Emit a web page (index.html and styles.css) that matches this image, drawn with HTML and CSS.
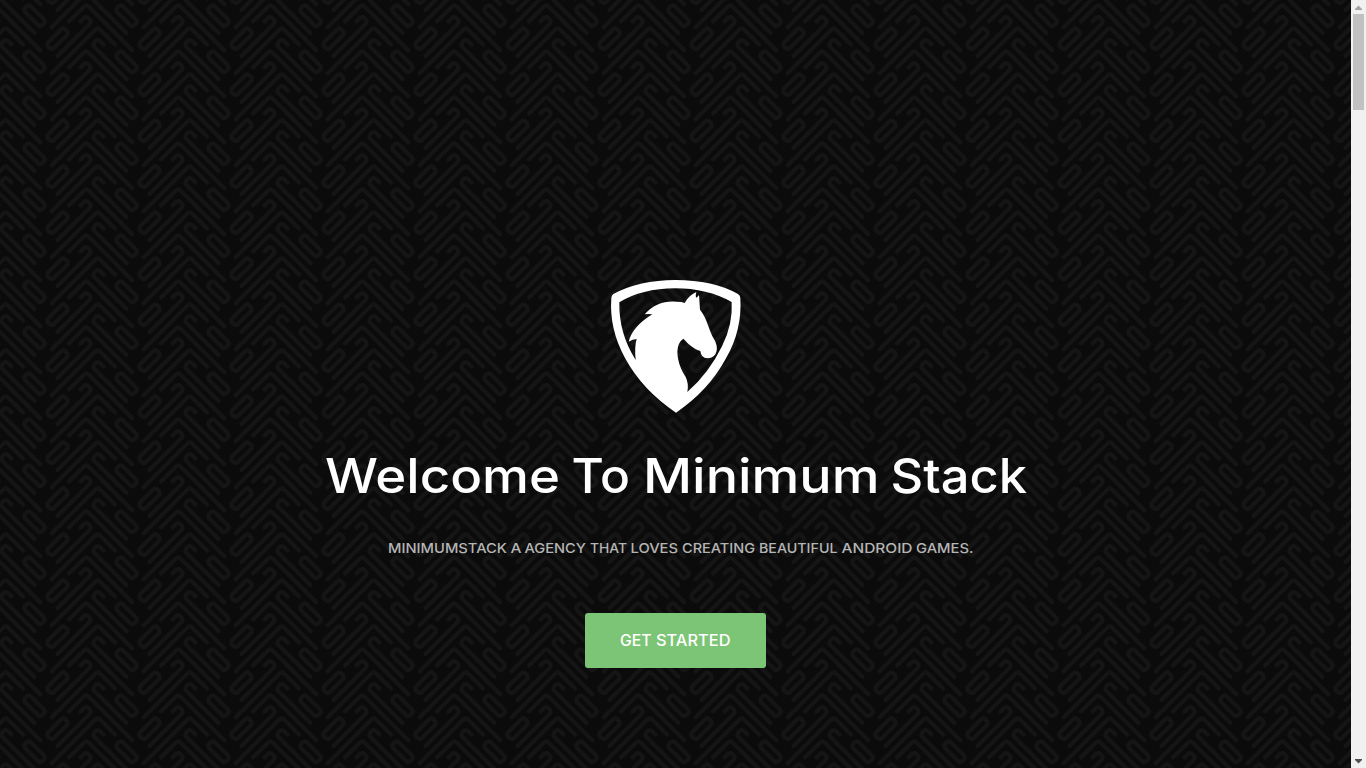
FILE: index.html
```html
<!DOCTYPE html>
<html lang="en">
<head>
<meta charset="utf-8">
<title>Minimum Stack</title>
<link rel="stylesheet" href="styles.css">
</head>
<body>
<main class="hero">
  <svg class="weave" aria-hidden="true">
    <defs>
      <g id="half">
        <path d="M-4 2L-1.400-.6Q-1-1-.6-.6L7 7"/>
        <path d="M2-2L1.400-2.600Q1-3 .6-2.600Q0-2 .4-1.600L6 4"/>
        <path d="M4.400-.4L4.600-.6Q5-1 5.400-.6L7.600 1.600Q8 2 7.600 2.400L7.400 2.600Q7 3 6.600 2.600L4.400.4Q4 0 4.400-.4Z"/>
      </g>
      <g id="strands">
        <use href="#half"/>
        <use href="#half" transform="translate(16 4) scale(-1 1)"/>
      </g>
      <g id="column">
        <use href="#strands" y="-8"/><use href="#strands"/><use href="#strands" y="8"/>
      </g>
      <pattern id="tile" width="92" height="46" patternUnits="userSpaceOnUse" patternTransform="translate(0 10)">
        <g class="strand" transform="scale(5.75)">
          <use href="#column" x="-16"/><use href="#column"/><use href="#column" x="16"/>
        </g>
      </pattern>
    </defs>
    <rect width="100%" height="100%" fill="url(#tile)"/>
  </svg>
  <div class="content">
    <svg class="shield" viewBox="0 0 450 450" role="img" aria-label="Horse shield">
      <path fill="#fff" fill-rule="evenodd" d="M34 84Q34 76 40 72Q118 30 226 30Q340 30 414 72Q421 77 421 84Q427 180 378 265Q326 362 228 428Q127 360 75 264Q27 176 34 84ZM58 97Q56 190 107 270Q103 229 110 207Q98 207 86 215Q97 170 157 133Q146 131 134 133Q171 90 231 95Q245 95 254 99Q266 76 289 66Q286 76 288 83Q293 81 297 75L300 119C322 145 326 181 342 207Q353 226 350 242Q346 264 322 265Q303 264 301 243C277 235 265 221 250 206Q233 217 232 245C233 280 247 304 257 321Q267 341 262 366Q326 311 366 229Q399 163 395 96Q321 55 226 55Q125 56 58 97Z"/>
    </svg>
    <h1 class="title">
      <svg class="title-line" viewBox="320 445 710 60">
        <text x="325" y="493" textLength="235" lengthAdjust="spacingAndGlyphs">Welcome</text>
        <text x="571.5" y="493" textLength="58.5" lengthAdjust="spacingAndGlyphs">To</text>
        <text x="643" y="493" textLength="236.5" lengthAdjust="spacingAndGlyphs">Minimum</text>
        <text x="890.5" y="493" textLength="136.5" lengthAdjust="spacingAndGlyphs">Stack</text>
      </svg>
    </h1>
    <p class="subtitle">
      <svg class="subtitle-line" viewBox="375 535 600 25">
        <text x="388" y="553" textLength="119" lengthAdjust="spacingAndGlyphs">MINIMUMSTACK</text>
        <text x="510.5" y="553" textLength="11" lengthAdjust="spacingAndGlyphs">A</text>
        <text x="524.5" y="553" textLength="61.5" lengthAdjust="spacingAndGlyphs">AGENCY</text>
        <text x="590" y="553" textLength="37" lengthAdjust="spacingAndGlyphs">THAT</text>
        <text x="630.5" y="553" textLength="47.5" lengthAdjust="spacingAndGlyphs">LOVES</text>
        <text x="682" y="553" textLength="73" lengthAdjust="spacingAndGlyphs">CREATING</text>
        <text x="759" y="553" textLength="78.5" lengthAdjust="spacingAndGlyphs">BEAUTIFUL</text>
        <text x="841.5" y="553" textLength="71" lengthAdjust="spacingAndGlyphs">ANDROID</text>
        <text x="916" y="553" textLength="57.5" lengthAdjust="spacingAndGlyphs">GAMES.</text>
      </svg>
    </p>
    <a class="button" href="#">
      <svg class="button-label" viewBox="585 613 181 55">
        <text x="620" y="646" textLength="31.5" lengthAdjust="spacingAndGlyphs">GET</text>
        <text x="656" y="646" textLength="74.5" lengthAdjust="spacingAndGlyphs">STARTED</text>
      </svg>
    </a>
  </div>
</main>
<div class="scrollbar">
  <svg class="arrow" viewBox="0 0 15 14"><path fill="#a3a3a3" d="M4 10V9L7.500 5.500L11 9V10Z"/></svg>
  <div class="thumb"></div>
  <svg class="arrow" viewBox="0 0 15 14"><path fill="#505050" d="M4 5V6L7.500 9.500L11 6V5Z"/></svg>
</div>
</body>
</html>
```
FILE: styles.css
```css
body {
  margin: 0;
  display: flex;
  width: 1366px;
  height: 768px;
  overflow: hidden;
  background: #0b0b0b;
  font-family: Inter, "Liberation Sans", sans-serif;
}
svg { display: block; }
.hero {
  position: relative;
  width: 1351px;
  height: 768px;
}
.weave {
  position: absolute;
  inset: 0;
  width: 100%;
  height: 100%;
}
.strand {
  fill: none;
  stroke: #151515;
  stroke-width: 0.68;
  stroke-linejoin: round;
  stroke-linecap: round;
}
.content {
  position: relative;
  box-sizing: border-box;
  width: 1350px;
  padding-top: 270px;
  display: flex;
  flex-direction: column;
  align-items: center;
}
.shield { width: 150px; height: 150px; }
.title { margin: 25px 0 0; font-size: 48px; font-weight: 500; }
.title-line { width: 710px; height: 60px; fill: #fff; }
.subtitle { margin: 30px 0 0; font-size: 13.5px; font-weight: 500; }
.subtitle-line { width: 600px; height: 25px; fill: #b5b5b5; }
.button {
  width: 181px;
  height: 55px;
  margin: 53px 0 0 1px;
  border-radius: 3px;
  background: #7cc576;
  font-size: 15.5px;
  font-weight: 500;
}
.button-label { width: 181px; height: 55px; fill: #fff; }
.scrollbar {
  display: flex;
  flex-direction: column;
  align-items: center;
  width: 15px;
  height: 768px;
  background: #f1f1f1;
}
.arrow { width: 15px; height: 14px; }
.arrow:last-child { margin-top: auto; }
.thumb { width: 11px; height: 96px; background: #c1c1c1; }
```
